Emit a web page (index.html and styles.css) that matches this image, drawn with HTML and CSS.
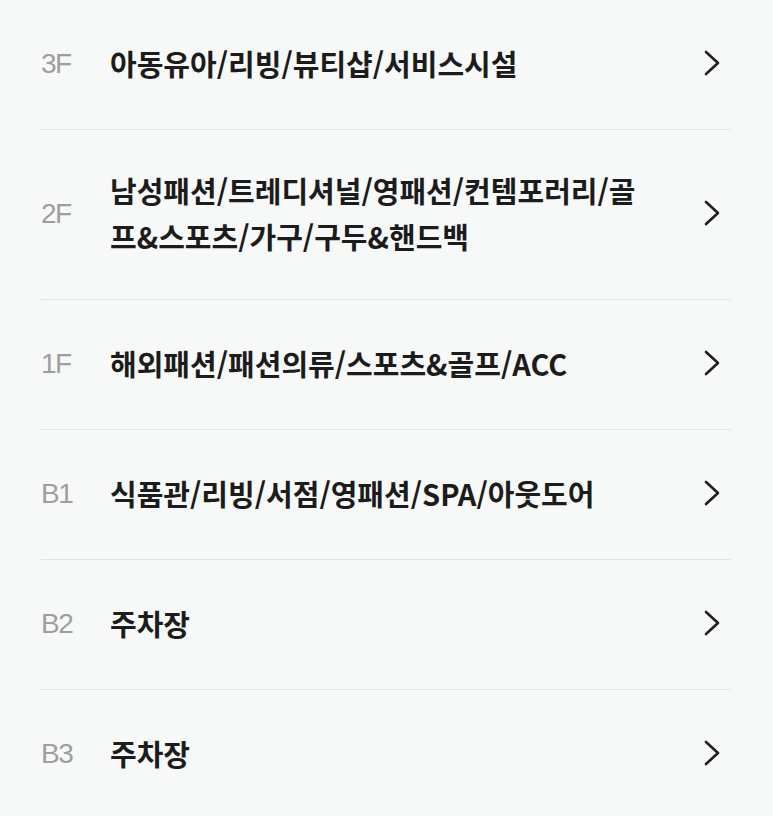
FILE: index.html
```html
<!DOCTYPE html>
<html lang="ko">
<head>
    <meta charset="UTF-8">
    <meta name="viewport" content="width=device-width, initial-scale=1.0">
    <title>층별 안내</title>
    <link rel="stylesheet" href="styles.css">
</head>
<body>
    <ul class="floor-list">
        <li class="floor-item">
            <span class="floor-name">3F</span>
            <span class="floor-desc">아동유아/리빙/뷰티샵/서비스시설</span>
            <svg class="chevron" viewBox="0 0 16 26"><path d="M2 2 L14 13 L2 24"/></svg>
        </li>
        <li class="floor-item">
            <span class="floor-name">2F</span>
            <span class="floor-desc">남성패션/트레디셔널/영패션/컨템포러리/골프&amp;스포츠/가구/구두&amp;핸드백</span>
            <svg class="chevron" viewBox="0 0 16 26"><path d="M2 2 L14 13 L2 24"/></svg>
        </li>
        <li class="floor-item">
            <span class="floor-name">1F</span>
            <span class="floor-desc">해외패션/패션의류/스포츠&amp;골프/ACC</span>
            <svg class="chevron" viewBox="0 0 16 26"><path d="M2 2 L14 13 L2 24"/></svg>
        </li>
        <li class="floor-item">
            <span class="floor-name">B1</span>
            <span class="floor-desc">식품관/리빙/서점/영패션/SPA/아웃도어</span>
            <svg class="chevron" viewBox="0 0 16 26"><path d="M2 2 L14 13 L2 24"/></svg>
        </li>
        <li class="floor-item">
            <span class="floor-name">B2</span>
            <span class="floor-desc">주차장</span>
            <svg class="chevron" viewBox="0 0 16 26"><path d="M2 2 L14 13 L2 24"/></svg>
        </li>
        <li class="floor-item">
            <span class="floor-name">B3</span>
            <span class="floor-desc">주차장</span>
            <svg class="chevron" viewBox="0 0 16 26"><path d="M2 2 L14 13 L2 24"/></svg>
        </li>
    </ul>
</body>
</html>
```

FILE: styles.css
```css
body { margin: 0; background: #f7f9f9; font-family: "Noto Sans CJK KR", "Noto Sans", sans-serif; }
.floor-list { list-style: none; margin: 0; padding: 0 42px 0 41px; }
.floor-item {
    display: flex;
    align-items: center;
    box-sizing: border-box;
    min-height: 130px;
    padding: 36.5px 0;
    border-bottom: 1px solid #dde7e9;
}
.floor-name {
    width: 69px;
    flex: none;
    padding-bottom: 2px;
    font-family: "Liberation Sans", Arial, sans-serif;
    font-size: 28px;
    letter-spacing: -1.5px;
    color: #9e9e9e;
}
.floor-desc {
    flex: 1;
    padding: 0 50px 4px 0;
    font-size: 29px;
    font-weight: 700;
    line-height: 46px;
    color: #1c1c1c;
}
.chevron { width: 16px; height: 26px; margin: 0 11px 3px 0; flex: none; }
.chevron path { fill: none; stroke: #1e1e1e; stroke-width: 2.6; stroke-linecap: round; stroke-linejoin: round; }
```
